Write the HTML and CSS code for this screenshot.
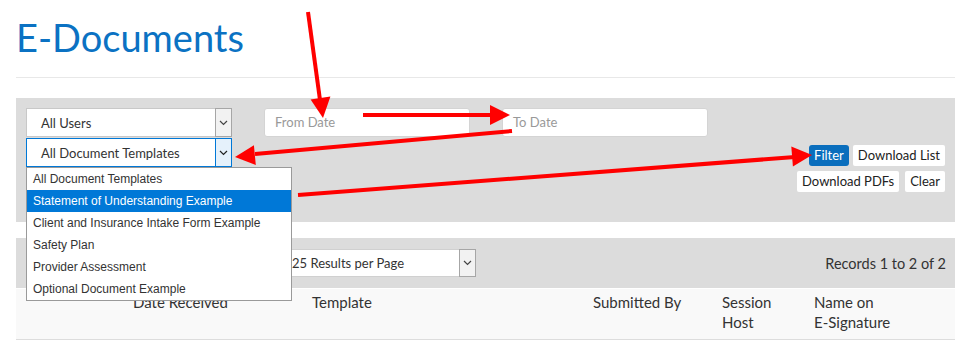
FILE: index.html
```html
<!DOCTYPE html>
<html>
<head>
<meta charset="utf-8">
<link rel="stylesheet" href="styles.css">
</head>
<body>
<div class="page">
  <header class="header">
    <h1 class="title">E-Documents</h1>
  </header>

  <section class="filters">
    <div class="filter-left">
      <div class="select-col">
        <div class="select">
          <span class="select-text">All Users</span>
          <span class="select-btn"><svg width="9" height="6" viewBox="0 0 9 6"><path d="M1 1l3.5 3.5L8 1" fill="none" stroke="#444" stroke-width="1.2"/></svg></span>
        </div>
        <div class="select select-focus">
          <span class="select-text">All Document Templates</span>
          <span class="select-btn"><svg width="9" height="6" viewBox="0 0 9 6"><path d="M1 1l3.5 3.5L8 1" fill="none" stroke="#222" stroke-width="1.2"/></svg></span>
          <ul class="dropdown">
            <li>All Document Templates</li>
            <li class="active">Statement of Understanding Example</li>
            <li>Client and Insurance Intake Form Example</li>
            <li>Safety Plan</li>
            <li>Provider Assessment</li>
            <li>Optional Document Example</li>
          </ul>
        </div>
      </div>
      <div class="dates">
        <div class="input">From Date</div>
        <div class="input">To Date</div>
      </div>
    </div>
    <div class="actions">
      <button class="btn btn-primary">Filter</button>
      <button class="btn">Download List</button>
      <button class="btn btn-pdf">Download PDFs</button>
      <button class="btn">Clear</button>
    </div>
  </section>

  <section class="results-bar">
    <div class="select select-results">
      <span class="select-text">25 Results per Page</span>
      <span class="select-btn"><svg width="9" height="6" viewBox="0 0 9 6"><path d="M1 1l3.5 3.5L8 1" fill="none" stroke="#444" stroke-width="1.2"/></svg></span>
    </div>
    <div class="records">Records 1 to 2 of 2</div>
  </section>

  <div class="table-head">
    <div class="th"></div>
    <div class="th">Date Received</div>
    <div class="th">Template</div>
    <div class="th">Submitted By</div>
    <div class="th th-narrow">Session Host</div>
    <div class="th th-last">Name on <span class="nowrap">E-Signature</span></div>
  </div>
</div>

<svg class="annotations" width="963" height="341" viewBox="0 0 963 341">
  <g stroke="#ff0000" stroke-width="4" fill="none">
    <line x1="308" y1="12" x2="320" y2="100"/>
    <line x1="363" y1="115" x2="492" y2="115"/>
    <line x1="512" y1="131" x2="255" y2="154"/>
    <line x1="298" y1="195" x2="795" y2="157"/>
  </g>
  <g fill="#ff0000">
    <polygon points="323,118 330.4,96.6 310.6,99.4"/>
    <polygon points="510,115 490,105 490,125"/>
    <polygon points="235,157 255.8,165.1 253.9,145.2"/>
    <polygon points="812,155 792.9,166.5 791.3,146.6"/>
  </g>
</svg>
</body>
</html>
```

FILE: styles.css
```css
* { box-sizing: border-box; }

body {
  margin: 0;
  background: #ffffff;
  font-family: Lato, "Open Sans", "Liberation Sans", sans-serif;
  color: #333333;
  position: relative;
}

.page {
  padding: 0 8px 0 16px;
}

.header {
  height: 78px;
  border-bottom: 1px solid #e8e8e8;
  padding-top: 14px;
}

.title {
  margin: 0;
  font-weight: 400;
  font-size: 38px;
  line-height: 46px;
  color: #0b72c3;
}

.filters {
  margin-top: 20px;
  height: 124px;
  background: #dcdcdc;
  padding: 10px;
  display: flex;
  justify-content: space-between;
  align-items: flex-start;
}

.filter-left {
  display: flex;
  align-items: flex-start;
}

.select-col {
  display: flex;
  flex-direction: column;
  gap: 1px;
  width: 206px;
}

.select {
  position: relative;
  height: 29px;
  background: #fff;
  border: 1px solid #c8c8c8;
  display: flex;
  align-items: center;
  font-size: 13px;
  color: #333;
}

.select-text {
  flex: 1;
  padding-left: 14px;
  white-space: nowrap;
}

.select-btn {
  width: 17px;
  align-self: stretch;
  margin: -1px -1px -1px 0;
  border: 1px solid #a6a6a6;
  background: #f2f2f2;
  display: flex;
  align-items: center;
  justify-content: center;
}

.select-focus {
  border-color: #0078d7;
}

.select-focus .select-btn {
  background: #e5f1fb;
  border-color: #0078d7;
}

.dropdown {
  position: absolute;
  left: -1px;
  top: 28px;
  width: 266px;
  margin: 0;
  padding: 0;
  list-style: none;
  background: #fff;
  border: 1px solid #9a9a9a;
  font-family: "Liberation Sans", Arial, sans-serif;
  font-size: 12px;
  color: #333;
  z-index: 5;
}

.dropdown li {
  height: 22px;
  line-height: 22px;
  padding-left: 6px;
  white-space: nowrap;
}

.dropdown li.active {
  background: #0078d7;
  color: #fff;
}

.dates {
  display: flex;
  gap: 32px;
  margin-left: 32px;
}

.input {
  width: 206px;
  height: 29px;
  background: #fff;
  border: 1px solid #d4d4d4;
  border-radius: 3px;
  padding-left: 10px;
  line-height: 27px;
  font-size: 13px;
  color: #999;
}

.actions {
  margin-top: 37px;
  width: 160px;
  display: flex;
  flex-wrap: wrap;
  justify-content: flex-end;
  gap: 5px 4px;
}

.btn {
  font-family: inherit;
  font-size: 13px;
  height: 21px;
  padding: 0 5px;
  border: 0;
  border-radius: 2px;
  background: #fff;
  color: #222;
  line-height: 21px;
}

.btn-primary {
  background: #0a6ebd;
  color: #fff;
  border-radius: 3px;
}

.btn-pdf { margin-right: 2px; }

.results-bar {
  margin-top: 16px;
  height: 50px;
  background: #dcdcdc;
  display: flex;
  align-items: center;
  justify-content: space-between;
  padding-right: 9px;
}

.select-results {
  margin-left: 261px;
  width: 199px;
  height: 28px;
  border-color: #d0d0d0;
}

.select-results .select-text {
  padding-left: 14px;
}

.records {
  font-size: 14.5px;
  color: #333;
}

.table-head {
  margin-top: 1px;
  height: 51px;
  background: #f9f9f9;
  border-bottom: 1px solid #dddddd;
  display: grid;
  grid-template-columns: 117px 179px 281px 129px 92px 1fr;
  padding-top: 3px;
  font-size: 15px;
  color: #333;
}

.th {
  line-height: 20px;
  padding-right: 12px;
}

.nowrap { white-space: nowrap; }

.th-narrow { padding-right: 20px; }
.th-last { padding-right: 50px; }

.annotations {
  position: absolute;
  left: 0;
  top: 0;
  pointer-events: none;
  z-index: 10;
}
```
